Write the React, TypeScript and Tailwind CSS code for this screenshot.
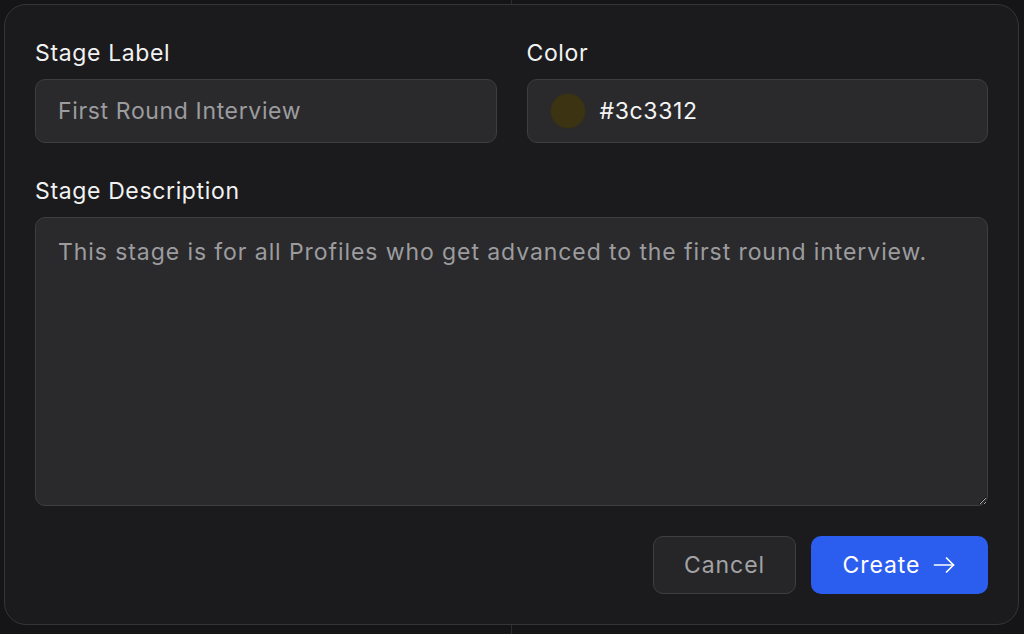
import React from "react";

export default function App() {
  return (
    <div
      className="relative w-[1024px] h-[634px] overflow-hidden bg-[#151517] pl-[4px] pr-[5px] pt-[4px] pb-[9px] tracking-[0.04em]"
      style={{ fontFamily: "Inter, 'Noto Sans', sans-serif" }}
    >
      <div className="absolute left-[511px] top-0 h-full w-px bg-[#2c2c2f]" />
      <div className="relative h-full rounded-[22px] border border-[#353538] bg-[#1b1b1d] px-[30px] pt-[33px] pb-[29px] flex flex-col">
        <div className="grid grid-cols-2 gap-x-[30px]">
          <div className="flex flex-col gap-[11px]">
            <label className="text-[23px] leading-[30px] text-[#f2f2f2]">Stage Label</label>
            <div className="h-[64px] rounded-[10px] border border-[#3e3e41] bg-[#2a2a2d] px-[22px] flex items-center">
              <span className="text-[23px] text-[#9c9c9f]">First Round Interview</span>
            </div>
          </div>
          <div className="flex flex-col gap-[11px]">
            <label className="text-[23px] leading-[30px] text-[#f2f2f2]">Color</label>
            <div className="h-[64px] rounded-[10px] border border-[#3e3e41] bg-[#2a2a2d] pl-[23px] pr-[22px] flex items-center gap-[15px]">
              <span className="w-[34px] h-[34px] rounded-full bg-[#3c3312] shadow-[0_0_2px_#3c3312]" />
              <span className="text-[23px] text-[#f4f4f4]">#3c3312</span>
            </div>
          </div>
        </div>
        <div className="mt-[33px] flex flex-col gap-[11px]">
          <label className="text-[23px] leading-[30px] text-[#f2f2f2]">Stage Description</label>
          <textarea
            readOnly
            defaultValue="This stage is for all Profiles who get advanced to the first round interview."
            className="h-[289px] rounded-[10px] border border-[#3e3e41] bg-[#2a2a2d] px-[22px] pt-[19px] text-[23px] leading-[30px] tracking-[0.04em] text-[#9c9c9f] outline-none resize-y [color-scheme:dark]"
          />
        </div>
        <div className="mt-[30px] flex justify-end gap-[15px]">
          <button className="h-[58px] w-[143px] rounded-[10px] border border-[#3f3f42] bg-[#262628] text-[23px] tracking-[0.04em] text-[#a3a3a6]">
            Cancel
          </button>
          <button className="h-[58px] w-[177px] rounded-[10px] bg-[#2b5def] text-[23px] tracking-[0.04em] text-white flex items-center justify-center gap-[12px]">
            <span>Create</span>
            <svg width="24" height="24" viewBox="0 0 24 24" fill="none" stroke="currentColor" strokeWidth="1.7" strokeLinecap="round" strokeLinejoin="round">
              <path d="M2.5 12h19" />
              <path d="M14.5 5l7 7-7 7" />
            </svg>
          </button>
        </div>
      </div>
    </div>
  );
}
